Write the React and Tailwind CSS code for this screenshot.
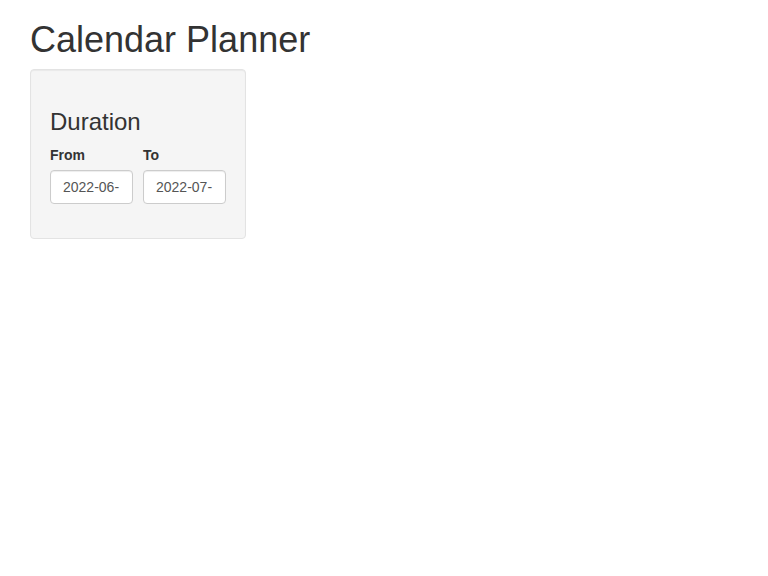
export default function App() {
  return (
    <div className="min-h-[576px] bg-white px-[30px] text-[14px] leading-[20px] text-[#333333]" style={{ fontFamily: '"Liberation Sans", Arial, sans-serif' }}>
      <h2 className="mt-[20px] mb-[9px] text-[36px] leading-[1.1] font-normal">Calendar Planner</h2>
      <div className="w-[216px] rounded-[4px] border border-[#e3e3e3] bg-[#f5f5f5] p-[19px] shadow-[inset_0_1px_1px_rgba(0,0,0,0.05)]">
        <h3 className="mt-[20px] mb-[10px] text-[24px] leading-[1.1] font-normal">Duration</h3>
        <div className="mb-[15px] flex gap-[10px]">
          <div className="w-[83px]">
            <label className="mb-[5px] block font-bold">From</label>
            <div className="h-[34px] overflow-hidden whitespace-nowrap rounded-[4px] border border-[#cccccc] bg-white px-[12px] py-[6px] text-[#555555] shadow-[inset_0_1px_1px_rgba(0,0,0,0.075)]">2022-06-</div>
          </div>
          <div className="w-[83px]">
            <label className="mb-[5px] block font-bold">To</label>
            <div className="h-[34px] overflow-hidden whitespace-nowrap rounded-[4px] border border-[#cccccc] bg-white px-[12px] py-[6px] text-[#555555] shadow-[inset_0_1px_1px_rgba(0,0,0,0.075)]">2022-07-</div>
          </div>
        </div>
      </div>
    </div>
  );
}
